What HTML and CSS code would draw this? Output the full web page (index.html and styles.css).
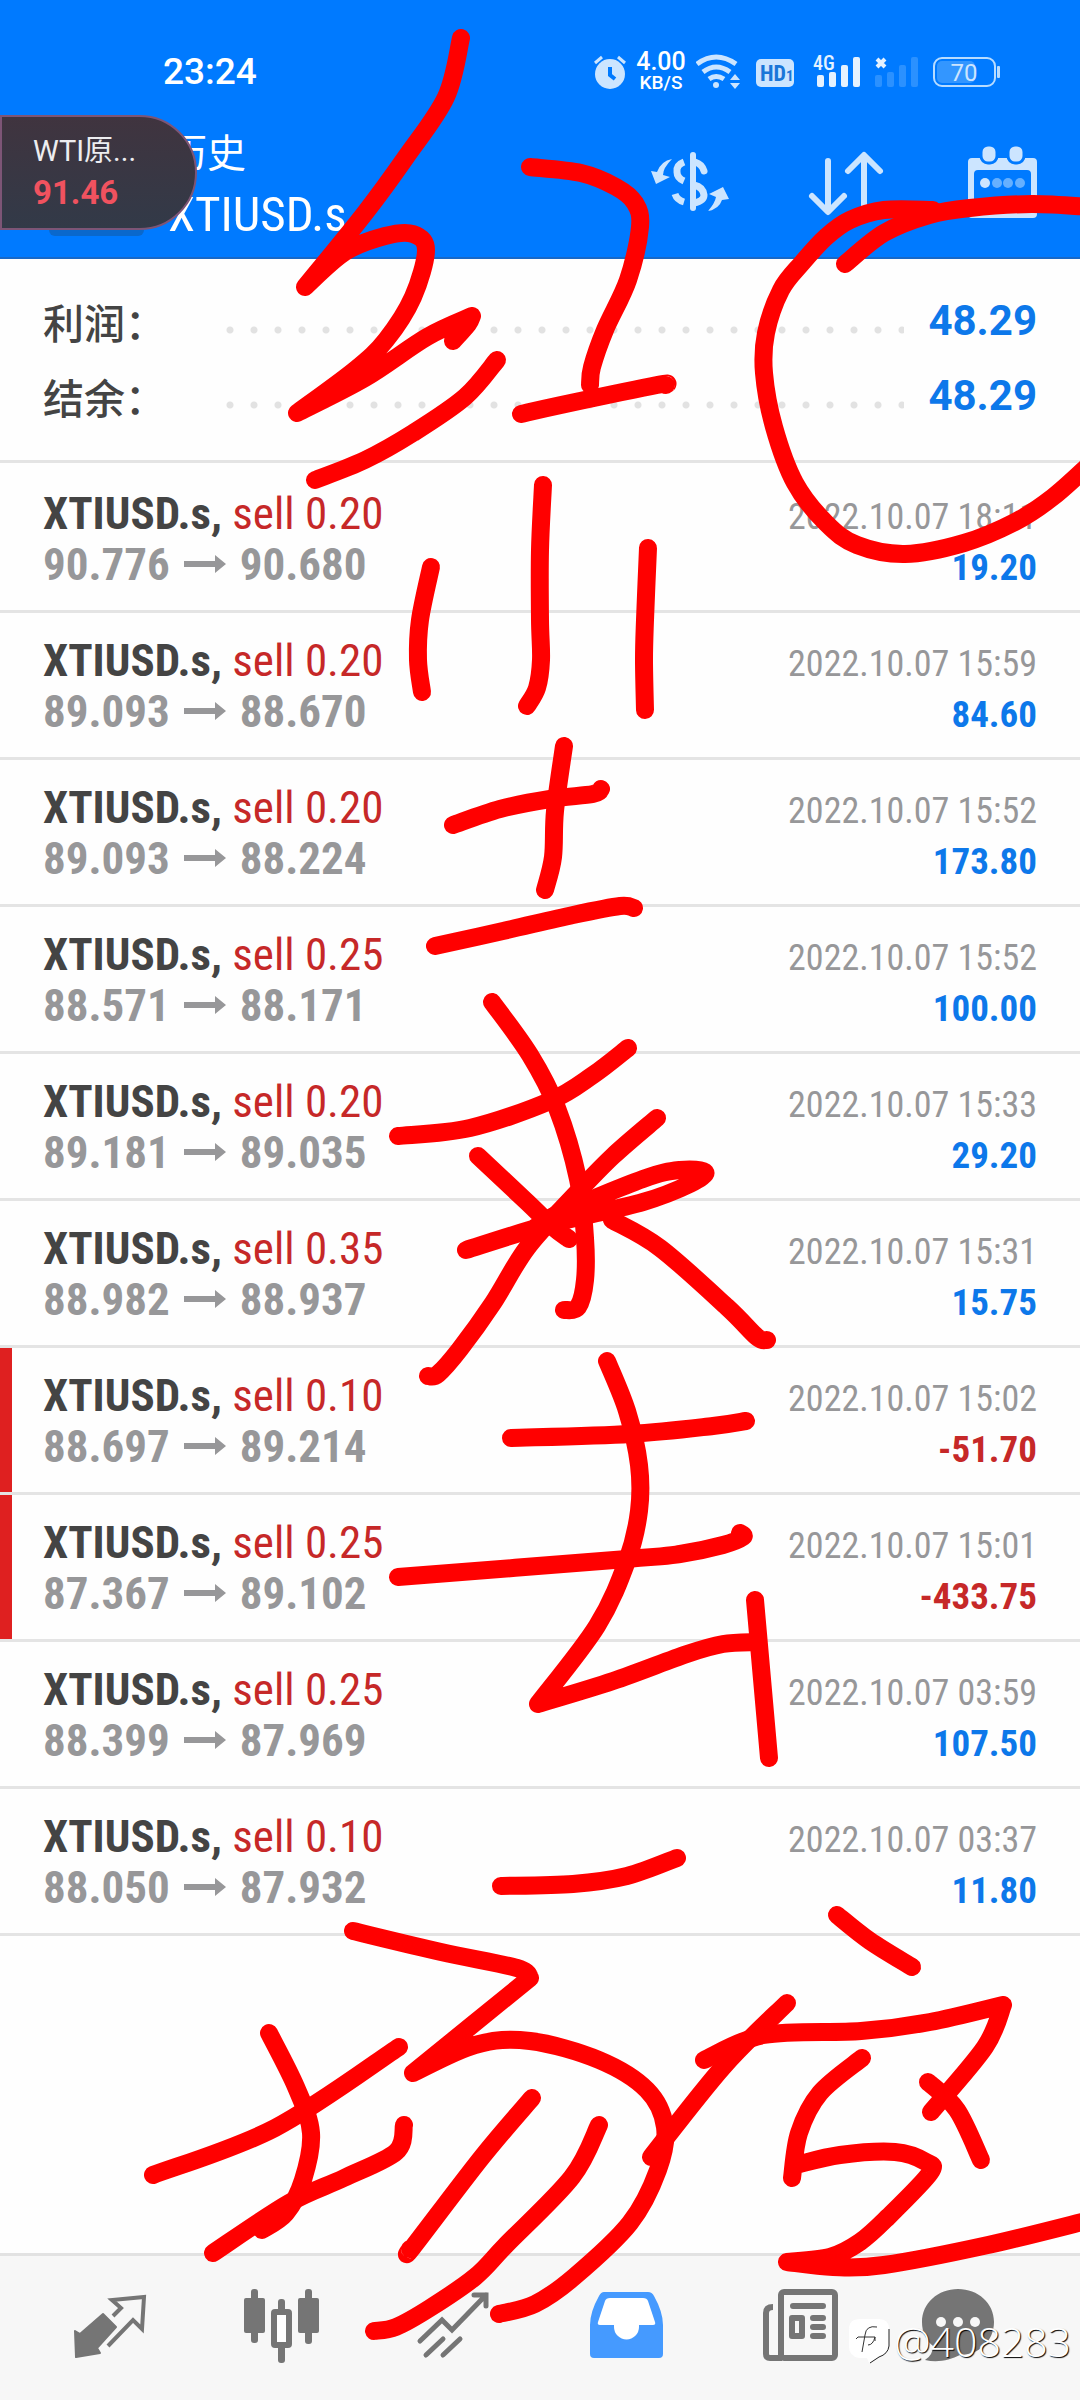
FILE: index.html
```html
<!DOCTYPE html>
<html lang="zh-CN">
<head>
    <meta charset="UTF-8">
    <meta name="viewport" content="width=device-width, initial-scale=1.0">
    <title>历史</title>
    <link rel="stylesheet" href="styles.css">
</head>
<body>
    <div class="screen">
        <header class="header">
            <div class="status-bar">
                <span class="clock">23:24</span>
                <div class="status-icons">
                    <svg width="32" height="44" viewBox="594 50 32 44">
                        <circle cx="610" cy="74" r="15" fill="#cce5ff"/>
                        <path d="M595 63l7-6M625 63l-7-6" stroke="#cce5ff" stroke-width="3" fill="none"/>
                        <path d="M610 67v8l5 4" stroke="#007aff" stroke-width="4" fill="none"/>
                    </svg>
                    <div class="speed"><b>4.00</b><span>KB/S</span></div>
                    <svg width="48" height="44" viewBox="696 50 48 44">
                        <g fill="none" stroke="#cce5ff" stroke-width="5">
                            <path d="M697 64Q716 50 736 64"/>
                            <path d="M703 72Q716 62 730 72"/>
                            <path d="M709 79Q716 74 724 79"/>
                        </g>
                        <circle cx="716" cy="85" r="3" fill="#cce5ff"/>
                        <path d="M730 80l5-6 5 6zM730 83l5 6 5-6z" fill="#cce5ff"/>
                    </svg>
                    <svg width="46" height="44" viewBox="752 50 46 44">
                        <rect x="756" y="59" width="38" height="28" rx="5" fill="#cce5ff"/>
                        <text class="hd" x="760" y="81">HD<tspan class="hd-num">1</tspan></text>
                    </svg>
                    <svg width="56" height="44" viewBox="806 50 56 44">
                        <text class="net" x="813" y="70">4G</text>
                        <g fill="#e5f2ff">
                            <rect x="817" y="75" width="7" height="12" rx="2"/>
                            <rect x="829" y="72" width="7" height="15" rx="2"/>
                            <rect x="841" y="65" width="7" height="22" rx="2"/>
                            <rect x="853" y="57" width="7" height="30" rx="2"/>
                        </g>
                    </svg>
                    <svg width="52" height="44" viewBox="870 50 52 44">
                        <path d="M877 59l8 8M885 59l-8 8" stroke="#e5f2ff" stroke-width="4"/>
                        <g fill="#2b91ff">
                            <rect x="875" y="75" width="7" height="12" rx="2"/>
                            <rect x="887" y="72" width="7" height="15" rx="2"/>
                            <rect x="899" y="65" width="7" height="22" rx="2"/>
                            <rect x="911" y="57" width="7" height="30" rx="2"/>
                        </g>
                    </svg>
                    <svg width="70" height="44" viewBox="930 50 70 44">
                        <rect x="937" y="61" width="38" height="22" rx="5" fill="#3396ff"/>
                        <rect x="934" y="58" width="61" height="28" rx="8" fill="none" stroke="#b8dcff" stroke-width="2"/>
                        <rect x="997" y="66" width="3" height="12" rx="1" fill="#b8dcff"/>
                        <text class="battery" x="964" y="81" text-anchor="middle">70</text>
                    </svg>
                </div>
            </div>
            <div class="app-bar">
                <div class="title">
                    <h1>历史</h1>
                    <p>XTIUSD.s</p>
                </div>
                <div class="actions">
                    <button type="button" aria-label="货币">
                        <svg width="80" height="80" viewBox="650 152 80 80">
                            <g fill="none" stroke="#cce5ff" stroke-width="7">
                                <path d="M693 158v53" stroke-width="6" stroke-linecap="round"/>
                                <path d="M684 165Q676 168 677 175Q677 181 684 184"/>
                                <path d="M695 165Q702 167 704 174" stroke-linecap="round"/>
                                <path d="M694 188Q703 190 704 198Q704 204 694 206"/>
                                <path d="M675 197Q677 203 684 205" stroke-linecap="butt"/>
                            </g>
                            <path d="M672 162Q663 171 663 178L670 180L656 187L651 174L657 175Q661 164 672 162z" fill="#cce5ff"/>
                            <path d="M708 214Q715 206 716 200L709 197L723 190L729 202L722 203Q719 212 708 214z" fill="#cce5ff"/>
                        </svg>
                    </button>
                    <button type="button" aria-label="排序">
                        <svg width="80" height="80" viewBox="806 152 80 80">
                            <g fill="none" stroke="#cce5ff" stroke-width="6" stroke-linecap="round" stroke-linejoin="round">
                                <path d="M828 164v50M812 199l16 16 16-16"/>
                                <path d="M864 210v-50M848 174l16-16 16 16"/>
                            </g>
                        </svg>
                    </button>
                    <button type="button" aria-label="日期">
                        <svg width="80" height="80" viewBox="962 152 80 80" overflow="visible">
                            <path fill="#cce5ff" fill-rule="evenodd" d="M972 161h61q4 0 4 4v52q0 4-4 4h-61q-4 0-4-4v-52q0-4 4-4zM978 173q-4 0-4 4v34q0 4 4 4h49q4 0 4-4v-34q0-4-4-4z"/>
                            <g fill="#cce5ff" stroke="#007aff" stroke-width="3">
                                <rect x="981" y="148" width="16" height="18" rx="7"/>
                                <rect x="1008" y="148" width="16" height="18" rx="7"/>
                            </g>
                            <circle cx="985" cy="186" r="5" fill="#cce5ff"/>
                            <g fill="#66b0ff">
                                <circle cx="997" cy="186" r="5"/>
                                <circle cx="1008" cy="186" r="5"/>
                                <circle cx="1020" cy="186" r="5"/>
                            </g>
                        </svg>
                    </button>
                </div>
            </div>
        </header>

        <main class="content">
            <dl class="summary">
                <div class="total">
                    <dt>利润：</dt>
                    <dd>48.29</dd>
                </div>
                <div class="total">
                    <dt>结余：</dt>
                    <dd>48.29</dd>
                </div>
            </dl>
            <ul class="deals" id="deals"></ul>
        </main>

        <nav class="tabs">
            <button type="button" aria-label="行情">
                <svg width="76" height="76" viewBox="72 2290 76 76">
                    <path d="M103 2314L116 2327L97 2348L100 2353L76 2357L75 2331L80 2334z" fill="#757575" stroke="#757575" stroke-width="2" stroke-linejoin="round"/>
                    <path d="M113 2316L121 2308L112 2300L144 2297L142 2329L133 2320L108 2346" fill="none" stroke="#757575" stroke-width="4"/>
                </svg>
            </button>
            <button type="button" aria-label="图表">
                <svg width="76" height="76" viewBox="244 2290 76 76" overflow="visible">
                    <g fill="#757575">
                        <rect x="244" y="2298" width="21" height="35" rx="2"/>
                        <rect x="251" y="2289" width="7" height="54" rx="3"/>
                        <rect x="278" y="2299" width="7" height="16" rx="3"/>
                        <rect x="278" y="2344" width="7" height="19" rx="3"/>
                        <rect x="298" y="2298" width="21" height="35" rx="2"/>
                        <rect x="305" y="2289" width="7" height="55" rx="3"/>
                    </g>
                    <rect x="274" y="2312" width="15" height="33" rx="1" fill="#fff" stroke="#757575" stroke-width="6"/>
                </svg>
            </button>
            <button type="button" aria-label="交易">
                <svg width="76" height="76" viewBox="416 2290 76 76">
                    <path d="M420 2341L442 2320L452 2330L486 2295M474 2295H486V2306M426 2355L443 2339M443 2355L460 2339" fill="none" stroke="#757575" stroke-width="5" stroke-linecap="round"/>
                </svg>
            </button>
            <button type="button" aria-label="历史">
                <svg width="76" height="76" viewBox="588 2290 76 76">
                    <path d="M604 2292H648Q652 2292 654 2296Q663 2312 663 2325V2354Q663 2358 659 2358H594Q590 2358 590 2354V2325Q590 2312 599 2296Q601 2292 604 2292z" fill="#459aff"/>
                    <path d="M610 2298H643Q647 2298 648 2301L655 2322Q656 2325 653 2325H639V2327A12 12 0 0 1 614 2327V2325H600Q597 2325 598 2322L605 2301Q606 2298 610 2298z" fill="#fff"/>
                </svg>
            </button>
            <button type="button" aria-label="新闻">
                <svg width="76" height="76" viewBox="760 2290 76 76" overflow="visible">
                    <g fill="none" stroke="#757575">
                        <path d="M773 2307Q766 2307 766 2313V2354Q766 2358 770 2358H782" stroke-width="6"/>
                        <rect x="781" y="2292" width="54" height="66" rx="3" stroke-width="6" fill="#f7f7f7"/>
                        <path d="M793 2306H823M813 2318H823M813 2327H823M813 2336H823" stroke-width="6" stroke-linecap="round"/>
                        <rect x="792" y="2318" width="10" height="18" stroke-width="6" fill="#f7f7f7" stroke-linejoin="round"/>
                    </g>
                </svg>
            </button>
            <button type="button" aria-label="消息">
                <svg width="76" height="76" viewBox="932 2290 76 76" overflow="visible">
                    <path d="M958 2289C978 2289 994 2303 994 2322C994 2341 979 2355 960 2355C950 2360 938 2363 925 2360Q933 2355 933 2346C926 2340 922 2332 922 2322C922 2303 938 2289 958 2289z" fill="#757575"/>
                    <g fill="#f7f7f7">
                        <circle cx="941" cy="2322" r="5"/>
                        <circle cx="958" cy="2322" r="5"/>
                        <circle cx="975" cy="2322" r="5"/>
                    </g>
                </svg>
            </button>
        </nav>

        <aside class="ticker">
            <span class="ticker-name">WTI原...</span>
            <strong class="ticker-price">91.46</strong>
        </aside>

        <svg class="ink" id="ink" viewBox="0 0 1080 2400" preserveAspectRatio="xMinYMin meet"></svg>

        <div class="watermark">
            <svg width="44" height="48" viewBox="0 0 44 48">
                <path d="M12 2H31Q41 2 41 12V29Q41 38 31 40L21 46L19 41H11Q1 39 1 30V12Q1 2 12 2z" fill="#fff"/>
                <path d="M41 12V29Q40 37 31 40L22 46" fill="none" stroke="#222" stroke-width="1"/>
                <path d="M29 10Q18 8 17 18L14 35M8 22L10 20H27V24M27 20Q25 28 20 28" fill="none" stroke="#333" stroke-width="1"/>
            </svg>
            <span>@408283</span>
        </div>
    </div>
    <script src="script.js"></script>
</body>
</html>
```
FILE: styles.css
```css
* {
    box-sizing: border-box;
    margin: 0;
    padding: 0;
}
body {
    font-family: Roboto, "Noto Sans CJK SC", sans-serif;
    background: #fefefe;
    color: #444;
}
button {
    background: none;
    border: none;
    cursor: pointer;
}
svg {
    display: block;
}
.screen {
    position: relative;
    display: flex;
    flex-direction: column;
    min-height: 100vh;
    overflow: hidden;
}

/* header */
.header {
    background: #007aff;
    border-bottom: 2px solid #1768c8;
    color: #fff;
}
.status-bar {
    display: flex;
    justify-content: space-between;
    align-items: center;
    height: 128px;
    padding: 50px 80px 34px 163px;
}
.clock {
    font-size: 37px;
    font-weight: 500;
    line-height: 44px;
}
.status-icons {
    display: flex;
    align-items: center;
    gap: 8px;
}
.speed {
    display: flex;
    flex-direction: column;
    align-items: center;
    width: 54px;
    font-size: 19px;
    font-weight: 500;
    line-height: 20px;
}
.speed b {
    font-size: 25px;
    font-weight: 500;
    line-height: 22px;
}
.hd {
    font: bold 22px "Roboto Condensed", sans-serif;
    fill: #1a76d8;
}
.hd-num {
    font-size: 15px;
}
.net {
    font: 500 20px "Roboto Condensed", sans-serif;
    fill: #e5f2ff;
}
.battery {
    font: 24px Roboto, sans-serif;
    fill: #cce5ff;
}
.app-bar {
    display: flex;
    justify-content: space-between;
    align-items: center;
    padding: 0 38px 7px 168px;
}
.title h1 {
    font-size: 39px;
    font-weight: 400;
    line-height: 52px;
}
.title p {
    font-family: "Roboto Condensed", sans-serif;
    font-size: 49px;
    line-height: 70px;
}
.actions {
    display: flex;
    gap: 76px;
}

/* totals */
.content {
    flex: 1;
}
.summary {
    padding: 24px 43px 27px;
    border-bottom: 3px solid #e4e4e4;
}
.total {
    display: flex;
    align-items: center;
    height: 75px;
    font-size: 41px;
}
.total dt {
    width: 183px;
    font-weight: 500;
}
.total::after {
    content: "";
    order: 1;
    flex: 1;
    height: 8px;
    margin: 19px 24px 0 0;
    background: radial-gradient(circle at 4px 4px, #e2e2e2 3px, transparent 4px) 0 0 / 24px 8px;
}
.total dd {
    order: 2;
    color: #0d78ea;
    font-size: 42px;
    font-weight: bold;
}

/* deal list */
.deals {
    padding-top: 3px;
    list-style: none;
    font-family: "Roboto Condensed", sans-serif;
}
.deal {
    padding: 22px 43px 20px;
    border-bottom: 3px solid #e4e4e4;
}
.deal.loss {
    background: linear-gradient(#df2020, #df2020) left / 12px 100% no-repeat;
}
.line {
    display: flex;
    justify-content: space-between;
    align-items: baseline;
    height: 51px;
    font-size: 45px;
    line-height: 51px;
}
.side {
    color: #c62828;
}
.prices {
    color: #979799;
    font-weight: bold;
}
.prices svg {
    display: inline-block;
    margin: 0 14px;
    vertical-align: 6px;
}
.time {
    color: #979799;
    font-size: 36px;
}
.profit {
    color: #0d78ea;
    font-size: 37px;
    font-weight: bold;
}
.loss .profit {
    color: #c62828;
}

/* bottom tabs */
.tabs {
    display: flex;
    height: 147px;
    padding: 0 24px;
    background: #f7f7f7;
    border-top: 3px solid #e2e2e2;
}
.tabs button {
    display: flex;
    flex: 1;
    justify-content: center;
    align-items: center;
}

/* floating price */
.ticker {
    position: absolute;
    top: 115px;
    left: 0;
    display: flex;
    flex-direction: column;
    width: 197px;
    height: 115px;
    padding: 14px 0 0 31px;
    background: linear-gradient(#40343f, #323a48);
    border: 2px solid #7d5576;
    border-radius: 0 58px 58px 0;
}
.ticker::after {
    content: "";
    position: absolute;
    top: 113px;
    left: 47px;
    width: 95px;
    height: 6px;
    background: #0a68cc;
    border-radius: 0 0 8px 8px;
}
.ticker-name {
    color: #ededf0;
    font-size: 29px;
    line-height: 40px;
}
.ticker-price {
    color: #f0525f;
    font-size: 33px;
    font-weight: 700;
    line-height: 44px;
}

.ink {
    position: absolute;
    top: 0;
    left: 0;
    width: 100%;
    height: 100%;
    fill: none;
    stroke: #f00;
    stroke-width: 18px;
    stroke-linecap: round;
    stroke-linejoin: round;
    pointer-events: none;
}

.watermark {
    position: absolute;
    right: 9px;
    bottom: 32px;
    display: flex;
    align-items: center;
    gap: 2px;
    color: #fff;
    font-family: "Open Sans", sans-serif;
    font-size: 41px;
    font-weight: 300;
    line-height: 54px;
    text-shadow: 1px 1px 1px #000;
}
```
FILE: script.js
```js
// symbol, volume, open, close, time, profit
const deals = [
    ["XTIUSD.s", "0.20", "90.776", "90.680", "2022.10.07 18:11", "19.20"],
    ["XTIUSD.s", "0.20", "89.093", "88.670", "2022.10.07 15:59", "84.60"],
    ["XTIUSD.s", "0.20", "89.093", "88.224", "2022.10.07 15:52", "173.80"],
    ["XTIUSD.s", "0.25", "88.571", "88.171", "2022.10.07 15:52", "100.00"],
    ["XTIUSD.s", "0.20", "89.181", "89.035", "2022.10.07 15:33", "29.20"],
    ["XTIUSD.s", "0.35", "88.982", "88.937", "2022.10.07 15:31", "15.75"],
    ["XTIUSD.s", "0.10", "88.697", "89.214", "2022.10.07 15:02", "-51.70"],
    ["XTIUSD.s", "0.25", "87.367", "89.102", "2022.10.07 15:01", "-433.75"],
    ["XTIUSD.s", "0.25", "88.399", "87.969", "2022.10.07 03:59", "107.50"],
    ["XTIUSD.s", "0.10", "88.050", "87.932", "2022.10.07 03:37", "11.80"]
];

const arrow = '<svg width="42" height="20" viewBox="0 0 42 20"><path d="M0 7H31V1L42 10L31 19V13H0z" fill="#979799"/></svg>';

document.getElementById("deals").innerHTML = deals.map(([symbol, volume, open, close, time, profit]) => `
    <li class="deal${profit < 0 ? " loss" : ""}">
        <div class="line">
            <span><b>${symbol},</b> <span class="side">sell ${volume}</span></span>
            <time class="time">${time}</time>
        </div>
        <div class="line">
            <span class="prices">${open}${arrow}${close}</span>
            <span class="profit">${profit}</span>
        </div>
    </li>`).join("");

// pen strokes, each one a list of x,y points; "|" is a sharp turn
const strokes = [
    "461,38 446,97 406,157 365,213 305,287 | 305,287 345,252 385,236 413,234 426,250 413,297 386,340 355,370 297,413 | 297,413 365,378 427,337 472,316 | 472,316 468,324 453,341",
    "497,360 465,397 413,433 365,460 315,480",
    "530,167 581,173 616,187 635,203 640,227 628,280 605,330 592,367 590,385",
    "521,414 561,405 657,385 666,385",
    "845,264 884,233 929,215 970,208 1032,204 1090,207",
    "933,210 884,210 850,220 826,237 802,263 781,290 766,333 764,373 774,427 795,483 826,523 857,545 905,554 964,543 1015,522 1053,497 1090,464",
    "543,485 540,550 540,620 541,660 537,688 527,706",
    "431,567 420,620 418,660 422,692",
    "648,548 645,620 644,660 645,710",
    "564,746 555,811 553,857 545,890",
    "453,825 500,809 550,799 593,794 601,789",
    "435,946 503,931 573,915 620,906 634,908",
    "492,1002 530,1055 557,1108 578,1179 585,1238 585,1280 578,1307 564,1310",
    "398,1136 470,1128 550,1101 593,1075 628,1048",
    "478,1156 527,1202 553,1227 569,1239",
    "657,1118 613,1156 573,1197 527,1248 493,1303 460,1349 438,1374 428,1376",
    "466,1250 547,1225 643,1202 690,1184 705,1172 680,1170 643,1179 560,1213 533,1229",
    "612,1220 660,1248 727,1307 757,1337 767,1340",
    "607,1361 627,1411 639,1465 639,1511 627,1561 597,1626 538,1704 | 538,1704 613,1681 687,1654 723,1644 757,1642",
    "511,1438 630,1434 713,1426 746,1421",
    "398,1577 627,1559 680,1554 723,1545 743,1537 740,1533",
    "755,1600 769,1758",
    "501,1886 573,1884 627,1876 677,1858",
    "269,2033 296,2087 311,2133 303,2180 286,2213 262,2230",
    "153,2175 275,2128 399,2047",
    "404,2125 396,2152 344,2178 289,2203 213,2253",
    "353,1931 441,1952 517,1968 530,1978 | 530,1978 413,2073 | 413,2073 475,2045 530,2041 599,2060 647,2090 665,2127 658,2170 630,2223 574,2277 535,2304 499,2314",
    "532,2098 482,2157 413,2247 410,2249",
    "599,2125 572,2177 506,2245 475,2277 430,2308 396,2327 374,2331",
    "837,1915 870,1941 912,1967",
    "704,2060 764,2035 861,2031 930,2022 1003,2005 | 1003,2005 985,2047 931,2112",
    "787,2003 723,2067 651,2157",
    "862,2058 820,2093 799,2133 792,2178 | 796,2165 840,2155 895,2152 926,2162 930,2173 888,2217 860,2242 830,2257 787,2262 | 787,2262 833,2267 884,2265 988,2245 1090,2220",
    "928,2082 957,2110 981,2160"
];

// smooth curve through every point (Catmull-Rom to Bezier)
function curve(points) {
    let d = `M${points[0]}`;
    for (let i = 0; i < points.length - 1; i++) {
        const p0 = points[i - 1] || points[i];
        const p1 = points[i];
        const p2 = points[i + 1];
        const p3 = points[i + 2] || p2;
        const c1 = [p1[0] + (p2[0] - p0[0]) / 6, p1[1] + (p2[1] - p0[1]) / 6];
        const c2 = [p2[0] - (p3[0] - p1[0]) / 6, p2[1] - (p3[1] - p1[1]) / 6];
        d += `C${c1} ${c2} ${p2}`;
    }
    return d;
}

document.getElementById("ink").innerHTML = strokes.map(stroke => {
    const d = stroke.split(" | ").map(part => curve(part.split(" ").map(p => p.split(",").map(Number)))).join("");
    return `<path d="${d}"/>`;
}).join("");
```
